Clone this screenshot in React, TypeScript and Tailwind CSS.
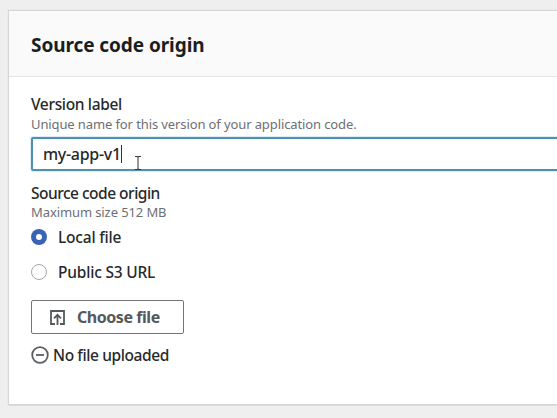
import React from "react";

function Radio({ label, checked = false }: { label: string; checked?: boolean }) {
  return (
    <label className="flex h-[20px] items-center">
      {checked ? (
        <span className="flex size-[16px] items-center justify-center rounded-full bg-[#3b63b4]">
          <span className="size-[6px] rounded-full bg-white" />
        </span>
      ) : (
        <span className="size-[16px] rounded-full border border-[#a3a8a8] bg-white" />
      )}
      <span className="ml-[11px] text-[15.5px] leading-[20px] font-medium tracking-[-0.2px]">{label}</span>
    </label>
  );
}

export default function App() {
  return (
    <div className="h-[418px] w-[557px] overflow-hidden bg-[#efefef] pt-[11px] pl-[9px] font-['Noto_Sans','Open_Sans',sans-serif] whitespace-nowrap text-[#26292c]">
      <section className="h-[393px] w-[600px] bg-white shadow-[0_0_1px_1px_#d5d7d7,0_1px_1px_0_#858a8c]">
        <header className="flex h-[66px] items-center border-b border-[#e3e4e4] bg-[#fafafa] pt-[2px] pl-[22px]">
          <h1 className="text-[19px] leading-[28px] font-bold tracking-[-0.08px] text-[#1b1e21]">Source code origin</h1>
        </header>
        <div className="flex flex-col items-start pt-[17px] pl-[22px]">
          <div className="text-[15.5px] leading-[20px] font-medium tracking-[-0.35px]">Version label</div>
          <div className="mt-[1px] text-[13px] leading-[18px] tracking-[-0.11px] text-[#6c7074]">Unique name for this version of your application code.</div>
          <div className="mt-[4px] flex h-[34px] w-[560px] items-center rounded-[2px] border-2 border-[#4f90b5] pl-[10px] shadow-[0_0_0_1px_#dceef8]">
            <span className="text-[16px] leading-[20px] font-medium tracking-[-0.3px]">my-app-v1</span>
            <span className="h-[18px] w-px bg-[#333]" />
            <svg className="relative top-[9px] ml-[12px]" width="8" height="16" viewBox="0 0 8 16" fill="none" stroke="#333" strokeWidth="1">
              <path d="M1 1.5h2l1 .5 1-.5h2M4 1.5v13M1 14.5h2l1-.5 1 .5h2" />
            </svg>
          </div>
          <div className="mt-[12px] text-[15.5px] leading-[20px] font-medium tracking-[-0.5px]">Source code origin</div>
          <div className="text-[13px] leading-[18px] tracking-[-0.1px] text-[#6c7074]">Maximum size 512 MB</div>
          <div className="mt-[6px] flex flex-col gap-[15px]">
            <Radio label="Local file" checked />
            <Radio label="Public S3 URL" />
          </div>
          <button className="mt-[18px] flex h-[34px] w-[153px] items-center rounded-[2px] border border-[#717579] pl-[17px] text-[#55595d]">
            <svg width="17" height="17" viewBox="0 0 17 17" fill="none" stroke="currentColor" strokeWidth="1.8">
              <path d="M6 15H2V2h13v13h-4M8.5 16V6M5 9.3l3.5-3.5L12 9.3" />
            </svg>
            <span className="ml-[11px] text-[16px] leading-[20px] font-bold tracking-[-0.45px]">Choose file</span>
          </button>
          <div className="mt-[11px] flex items-center">
            <svg width="18" height="18" viewBox="0 0 18 18" fill="none" stroke="#5b5f63" strokeWidth="1.8">
              <circle cx="9" cy="9" r="7.8" />
              <path d="M5 9h8" />
            </svg>
            <span className="ml-[4px] text-[15.5px] leading-[20px] font-medium tracking-[-0.4px]">No file uploaded</span>
          </div>
        </div>
      </section>
    </div>
  );
}
